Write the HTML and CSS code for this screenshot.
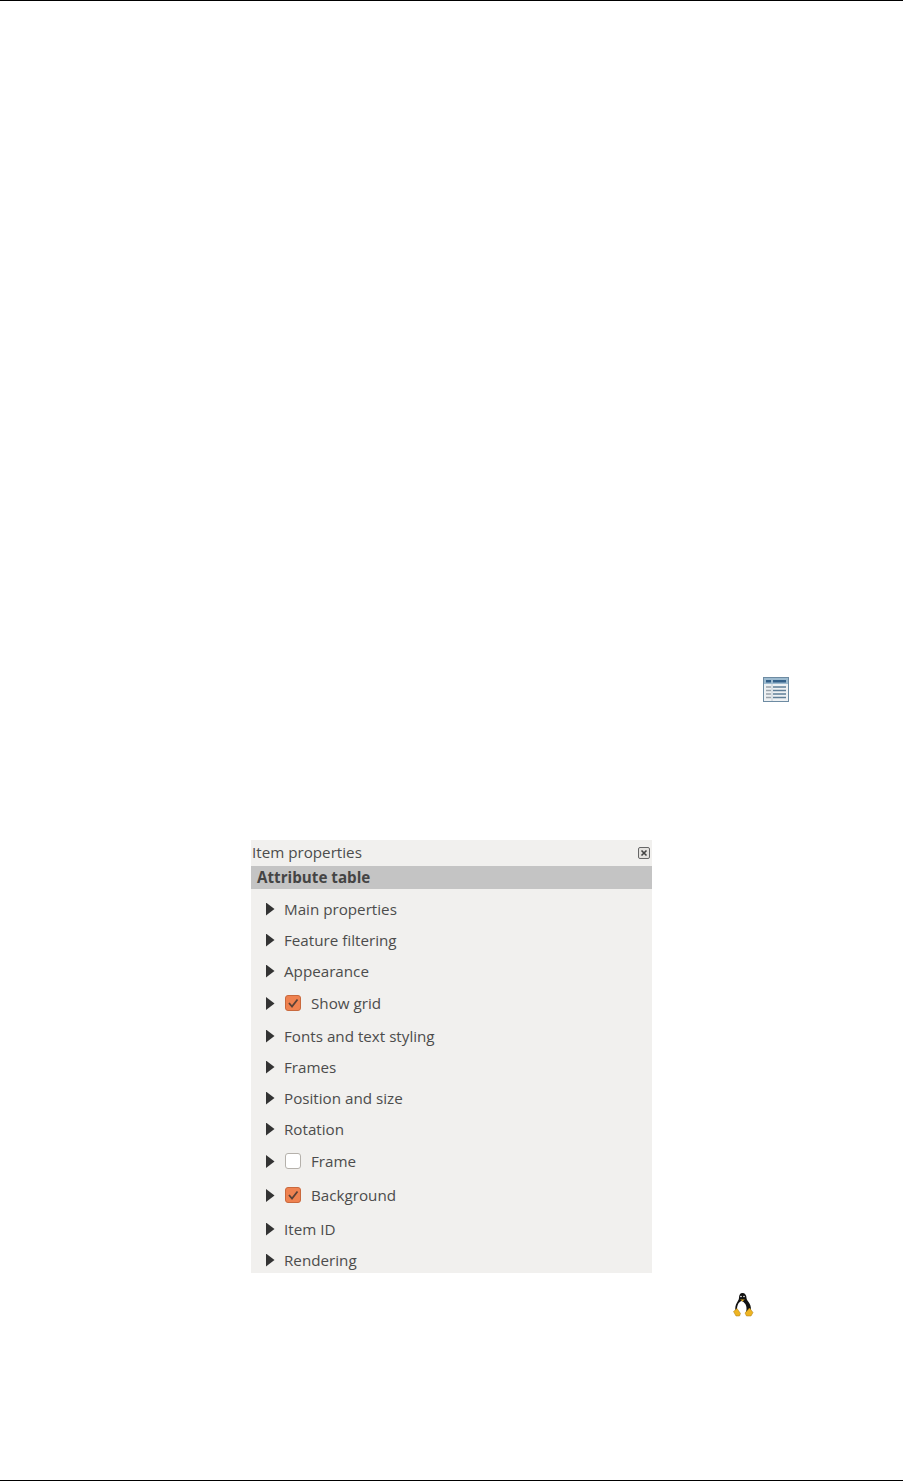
FILE: index.html
```html
<!DOCTYPE html>
<html lang="en">
<head>
<meta charset="utf-8">
<title>Item properties</title>
<link rel="stylesheet" href="styles.css">
</head>
<body>
<div class="page">
  <div class="rule"></div>
  <div class="icon-line table-line">
    <svg class="table-icon" width="26" height="26" viewBox="0 0 26 26">
      <rect x="0.5" y="0.5" width="25" height="24" fill="#eef1f3" stroke="#6d8ba2"/>
      <rect x="1" y="1" width="24" height="6" fill="#9dbbd0"/>
      <rect x="3" y="3" width="5" height="2.5" fill="#34618a"/>
      <rect x="10" y="3" width="13" height="2.5" fill="#34618a"/>
      <path d="M3 10h5M3 13.500h5M3 17h5M3 20.500h5" stroke="#9aa3aa" stroke-width="1.500"/>
      <path d="M10 10h13M10 13.500h13M10 17h13M10 20.500h13" stroke="#5f7f98" stroke-width="1.500"/>
      <path d="M9 7v17" stroke="#c3ced6"/>
    </svg>
  </div>
  <section class="panel">
    <div class="panel-title">
      <span>Item properties</span>
      <svg class="close" width="12" height="12" viewBox="0 0 12 12">
        <rect x="0.500" y="0.500" width="11" height="11" rx="1.500" fill="#e4e2df" stroke="#666"/>
        <path d="M3.500 3.500l5 5M8.500 3.500l-5 5" stroke="#444" stroke-width="1.600"/>
      </svg>
    </div>
    <div class="panel-head">Attribute table</div>
    <ul class="groups">
      <li class="group"><i class="arrow"></i><span>Main properties</span></li>
      <li class="group"><i class="arrow"></i><span>Feature filtering</span></li>
      <li class="group"><i class="arrow"></i><span>Appearance</span></li>
      <li class="group tall"><i class="arrow"></i><i class="check on"><svg width="16" height="16" viewBox="0 0 16 16"><path d="M4 8l3 3.500 5.500-7" fill="none" stroke="#5a4237" stroke-width="1.800"/></svg></i><span>Show grid</span></li>
      <li class="group"><i class="arrow"></i><span>Fonts and text styling</span></li>
      <li class="group"><i class="arrow"></i><span>Frames</span></li>
      <li class="group"><i class="arrow"></i><span>Position and size</span></li>
      <li class="group"><i class="arrow"></i><span>Rotation</span></li>
      <li class="group tall"><i class="arrow"></i><i class="check"></i><span>Frame</span></li>
      <li class="group tall gap-after"><i class="arrow"></i><i class="check on"><svg width="16" height="16" viewBox="0 0 16 16"><path d="M4 8l3 3.500 5.500-7" fill="none" stroke="#5a4237" stroke-width="1.800"/></svg></i><span>Background</span></li>
      <li class="group"><i class="arrow"></i><span>Item ID</span></li>
      <li class="group"><i class="arrow"></i><span>Rendering</span></li>
    </ul>
  </section>
  <div class="icon-line tux-line">
    <svg width="22" height="26" viewBox="0 0 22 26">
      <path d="M10.500 2C8 2 7 4 7 7c0 2-2 4-3 6.500C3 16 3 19 4 21h14c1.500-2.500 1-6-.5-8.500C16 10 14.500 9 14.500 7c0-3-1.500-5-4-5z" fill="#111"/>
      <path d="M9.500 10C6.500 11 5 14.500 5 18c0 2 1.500 4 3 4.500h5c1-1 1.500-3 1.500-5C14.500 14 12.500 11 9.500 10z" fill="#fff"/>
      <path d="M8 8c1.200.8 3.800.8 5 0l-2.500 2.500z" fill="#eeb422"/>
      <path d="M1.500 20.500L5 17.500l3.500 5-1 2.500H4zM21 21.500L17.500 17 13 22l1.500 3H19z" fill="#eeb422" stroke="#a87a10" stroke-width=".5"/>
      <circle cx="9" cy="5.500" r=".8" fill="#fff"/><circle cx="12" cy="5.500" r=".8" fill="#fff"/>
    </svg>
  </div>
  <div class="rule bottom"></div>
</div>
</body>
</html>
```
FILE: styles.css
```css
* { box-sizing: border-box; }
html, body { margin: 0; padding: 0; background: #fff; }
.page { height: 1482px; display: flex; flex-direction: column; overflow: hidden; background: #fff; }
.rule { height: 1px; background: #000; flex: none; }
.rule.bottom { margin-top: auto; margin-bottom: 1px; }
.icon-line { display: flex; flex: none; }
.table-line { padding: 676px 0 0 763px; height: 839px; }
.tux-line { padding: 18px 0 0 732px; }
.panel { width: 401px; height: 433px; margin-left: 251px; background: #f1f0ee; overflow: hidden; flex: none;
  font-family: "Open Sans", "Noto Sans", sans-serif; font-size: 15.200px; color: #4c4c4c; }
.panel-title { height: 26px; display: flex; align-items: center; justify-content: space-between; padding: 0 2px 2px 1px; }
.close { flex: none; margin-top: 1px; }
.panel-head { height: 23px; line-height: 23px; padding-left: 6px; background: #c4c4c4; font-weight: 700; color: #444; }
.groups { list-style: none; margin: 0; padding: 4px 0 0 0; }
.group { height: 31px; display: flex; align-items: center; padding-left: 15px; }
.group.tall { height: 34px; }
.group.gap-after { margin-bottom: 1px; }
.arrow { width: 8.500px; height: 13px; margin: 1px 9.500px 0 0; flex: none; background: #333; clip-path: polygon(0 0, 100% 50%, 0 100%); }
.check { width: 16px; height: 16px; margin: 0 10px 0 1px; flex: none; border-radius: 3px; background: #fff; border: 1px solid #b5b1ab; display: block; }
.check.on { background: #ef8250; border-color: #c9693d; }
.check svg { display: block; margin: -1px; }
```
